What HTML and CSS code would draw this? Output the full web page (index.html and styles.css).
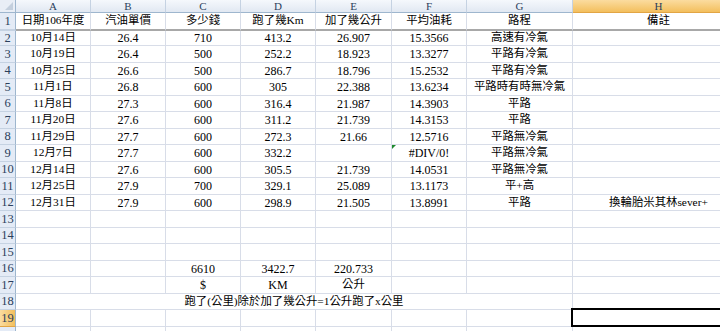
FILE: index.html
```html
<!DOCTYPE html>
<html lang="zh-Hant">
<head>
<meta charset="utf-8">
<title>油耗</title>
<link rel="stylesheet" href="styles.css">
</head>
<body>
<div class="sheet">
  <div class="corner"></div>
  <div class="ch">A</div><div class="ch">B</div><div class="ch">C</div><div class="ch">D</div><div class="ch">E</div><div class="ch">F</div><div class="ch">G</div><div class="ch sel">H</div>

  <div class="rh r1">1</div><div class="c r1 t">日期106年度</div><div class="c r1 t">汽油單價</div><div class="c r1 t">多少錢</div><div class="c r1 t">跑了幾Km</div><div class="c r1 t">加了幾公升</div><div class="c r1 t">平均油耗</div><div class="c r1 t">路程</div><div class="c r1 t">備註</div>

  <div class="rh">2</div><div class="c t">10月14日</div><div class="c">26.4</div><div class="c">710</div><div class="c">413.2</div><div class="c">26.907</div><div class="c">15.3566</div><div class="c t">高速有冷氣</div><div class="c"></div>
  <div class="rh">3</div><div class="c t">10月19日</div><div class="c">26.4</div><div class="c">500</div><div class="c">252.2</div><div class="c">18.923</div><div class="c">13.3277</div><div class="c t">平路有冷氣</div><div class="c"></div>
  <div class="rh">4</div><div class="c t">10月25日</div><div class="c">26.6</div><div class="c">500</div><div class="c">286.7</div><div class="c">18.796</div><div class="c">15.2532</div><div class="c t">平路有冷氣</div><div class="c"></div>
  <div class="rh">5</div><div class="c t">11月1日</div><div class="c">26.8</div><div class="c">600</div><div class="c">305</div><div class="c">22.388</div><div class="c">13.6234</div><div class="c t">平路時有時無冷氣</div><div class="c"></div>
  <div class="rh">6</div><div class="c t">11月8日</div><div class="c">27.3</div><div class="c">600</div><div class="c">316.4</div><div class="c">21.987</div><div class="c">14.3903</div><div class="c t">平路</div><div class="c"></div>
  <div class="rh">7</div><div class="c t">11月20日</div><div class="c">27.6</div><div class="c">600</div><div class="c">311.2</div><div class="c">21.739</div><div class="c">14.3153</div><div class="c t">平路</div><div class="c"></div>
  <div class="rh">8</div><div class="c t">11月29日</div><div class="c">27.7</div><div class="c">600</div><div class="c">272.3</div><div class="c">21.66</div><div class="c">12.5716</div><div class="c t">平路無冷氣</div><div class="c"></div>
  <div class="rh">9</div><div class="c t">12月7日</div><div class="c">27.7</div><div class="c">600</div><div class="c">332.2</div><div class="c"></div><div class="c err">#DIV/0!</div><div class="c t">平路無冷氣</div><div class="c"></div>
  <div class="rh">10</div><div class="c t">12月14日</div><div class="c">27.6</div><div class="c">600</div><div class="c">305.5</div><div class="c">21.739</div><div class="c">14.0531</div><div class="c t">平路無冷氣</div><div class="c"></div>
  <div class="rh">11</div><div class="c t">12月25日</div><div class="c">27.9</div><div class="c">700</div><div class="c">329.1</div><div class="c">25.089</div><div class="c">13.1173</div><div class="c t">平+高</div><div class="c"></div>
  <div class="rh">12</div><div class="c t">12月31日</div><div class="c">27.9</div><div class="c">600</div><div class="c">298.9</div><div class="c">21.505</div><div class="c">13.8991</div><div class="c t">平路</div><div class="c t">換輪胎米其林sever+</div>

  <div class="rh">13</div><div class="c"></div><div class="c"></div><div class="c"></div><div class="c"></div><div class="c"></div><div class="c"></div><div class="c"></div><div class="c"></div>
  <div class="rh">14</div><div class="c"></div><div class="c"></div><div class="c"></div><div class="c"></div><div class="c"></div><div class="c"></div><div class="c"></div><div class="c"></div>
  <div class="rh">15</div><div class="c"></div><div class="c"></div><div class="c"></div><div class="c"></div><div class="c"></div><div class="c"></div><div class="c"></div><div class="c"></div>
  <div class="rh">16</div><div class="c"></div><div class="c"></div><div class="c">6610</div><div class="c">3422.7</div><div class="c">220.733</div><div class="c"></div><div class="c"></div><div class="c"></div>
  <div class="rh">17</div><div class="c"></div><div class="c"></div><div class="c">$</div><div class="c">KM</div><div class="c t">公升</div><div class="c"></div><div class="c"></div><div class="c"></div>
  <div class="rh">18</div><div class="c merged t">跑了(公里)除於加了幾公升=1公升跑了x公里</div><div class="c"></div>
  <div class="rh sel">19</div><div class="c"></div><div class="c"></div><div class="c"></div><div class="c"></div><div class="c"></div><div class="c"></div><div class="c"></div><div class="c active"></div>
  <div class="rh"></div><div class="c"></div><div class="c"></div><div class="c"></div><div class="c"></div><div class="c"></div><div class="c"></div><div class="c"></div><div class="c"></div>
</div>
</body>
</html>
```
FILE: styles.css
```css
html, body {
  margin: 0;
  padding: 0;
  background: #ffffff;
  overflow: hidden;
}

.sheet {
  display: grid;
  grid-template-columns: 16px 75px 75px 75px 75px 76px 75px 106px 172px;
  grid-template-rows: 13px 18px 15px 17px 16px 17px 16px 17px 16px 17px 16px 17px 16px 17px 16px 17px 16px 17px 16px 17px 16px;
  width: 745px;
  font-family: "Liberation Serif", "Noto Sans CJK TC", serif;
  font-size: 12px;
  color: #000;
}

.sheet > div {
  box-sizing: border-box;
  display: flex;
  align-items: center;
  justify-content: center;
  white-space: nowrap;
  overflow: visible;
  line-height: 1;
}

.corner {
  background: #e9eef6;
  border-right: 1px solid #9eb6ce;
  border-bottom: 1px solid #9eb6ce;
  position: relative;
}
.corner::after {
  content: "";
  position: absolute;
  right: 2px;
  bottom: 2px;
  width: 0;
  height: 0;
  border-left: 8px solid transparent;
  border-bottom: 8px solid #c4cfdd;
}

.ch {
  background: linear-gradient(#f5f8fc, #e1e8f2);
  border-right: 1px solid #c5d2e2;
  border-bottom: 1px solid #9eb6ce;
  color: #2b3f5c;
  font-size: 11px;
}
.ch.sel {
  background: linear-gradient(#fbdc9f, #f3bf5d);
  border-right-color: #e2a544;
  border-bottom-color: #e2a544;
}

.rh {
  background: #e4ebf6;
  border-right: 1px solid #9eb6ce;
  border-bottom: 1px solid #c5d2e2;
  color: #2b3f5c;
  font-size: 12.5px;
}
.rh.sel {
  background: linear-gradient(90deg, #fbdc9f, #f3bf5d);
  border-bottom-color: #e2a544;
}
.rh.r1 {
  border-bottom: 2px solid #c5d2e2;
}

.c {
  border-right: 1px solid #d8dde8;
  border-bottom: 1px solid #d8dde8;
}
.c.t {
  font-size: 11.4px;
}
.c.r1 {
  border-bottom: 2px solid #a8a8a8;
}

.merged {
  grid-column: span 7;
}

.err {
  position: relative;
}
.err::before {
  content: "";
  position: absolute;
  left: 0;
  top: 0;
  width: 0;
  height: 0;
  border-top: 4px solid #1f8a2e;
  border-right: 4px solid transparent;
}

.active {
  position: relative;
}
.active::after {
  content: "";
  position: absolute;
  left: -2px;
  top: -2px;
  right: 0;
  bottom: -1px;
  border: 2px solid #000;
}
```
